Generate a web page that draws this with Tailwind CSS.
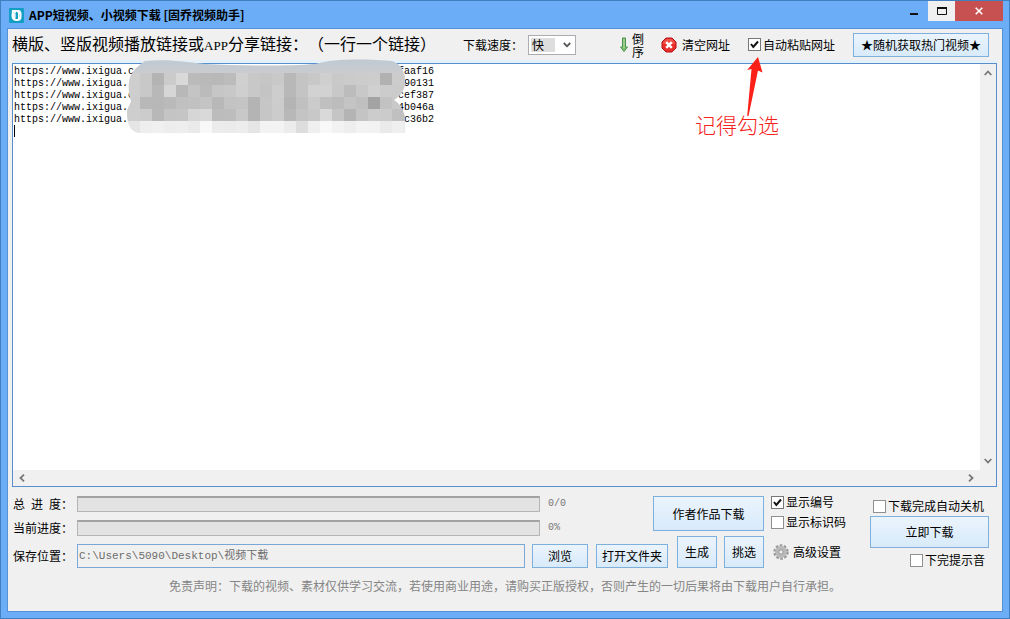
<!DOCTYPE html>
<html lang="zh-CN">
<head>
<meta charset="utf-8">
<title>APP短视频、小视频下载</title>
<script src="https://cdn.jsdelivr.net/npm/@tailwindcss/browser@4"></script>
</head>
<body class="relative flex h-screen flex-col border border-[#4080c0] bg-[#6badf6] font-['Noto_Sans_CJK_SC',sans-serif] text-xs leading-4 text-black [text-spacing-trim:space-all]">

<header class="flex h-7 shrink-0 items-start justify-between pr-1.5 pl-2">
  <div class="flex h-7 items-center gap-[5px]">
    <svg class="size-[15px]" viewBox="0 0 15 15"><rect width="15" height="15" rx="1" fill="#159ec5"/><path d="M3 2H9Q12.500 2 12.500 6V9Q12.500 13 8 13Q2.500 13 2.500 8Z" fill="#fff"/><path d="M7.500 3.500L9 5V11H6.500V5Z" fill="#159ec5"/><path d="M4 4L6 6V9M10.500 6V9" stroke="#bce8f2" fill="none"/></svg>
    <h1 class="text-xs font-bold">APP短视频、小视频下载 [固乔视频助手]</h1>
  </div>
  <div class="flex h-5">
    <button class="flex w-7 items-center justify-center" aria-label="最小化"><svg class="h-3 w-2" viewBox="0 0 8 12"><path d="M0 9H8" stroke="#111" stroke-width="2"/></svg></button>
    <button class="flex w-[27px] items-center justify-center bg-[#f0f0f0]" aria-label="最大化"><svg class="h-2 w-2.5" viewBox="0 0 10 8"><path d="M.5 0V7.500H9.500V0" fill="none" stroke="#111"/><path d="M0 1H10" stroke="#111" stroke-width="2"/></svg></button>
    <button class="flex w-12 items-center justify-center bg-[#c75050]" aria-label="关闭"><svg class="size-2" viewBox="0 0 8 8"><path d="M.7.7L7.300 7.300M7.300.7L.7 7.300" stroke="#fff" stroke-width="1.600"/></svg></button>
  </div>
</header>

<main class="mx-[7px] mb-[7px] flex min-h-0 flex-1 flex-col bg-[#f0f0f0] outline outline-[#5692d4]">
  <div class="flex h-[31px] shrink-0 items-center pr-[13px] pl-1">
    <label for="links" class="w-[451px] text-base leading-5 whitespace-nowrap">横版、竖版视频播放链接或<span class="font-['Liberation_Serif',serif] text-[13px]">APP</span>分享链接：（一行一个链接）</label>
    <label for="speed">下载速度：</label>
    <div class="relative ml-[5px] h-5 w-12 border border-[#abadb3] bg-white p-0.5">
      <select id="speed" class="block h-[14px] w-6 appearance-none bg-[#dedede] pl-px text-xs leading-[14px]"><option>快</option></select>
      <svg class="pointer-events-none absolute top-1.5 right-1 h-1.5 w-2" viewBox="0 0 8 6"><path d="M.8 1L4 4.300L7.200 1" fill="none" stroke="#555" stroke-width="1.800"/></svg>
    </div>
    <button class="ml-11 flex items-center gap-1">
      <svg class="h-4 w-2" viewBox="0 0 8 16"><path d="M2.500 1H5.500V10H7.500L4 14.500L.5 10H2.500Z" fill="#83bd75" stroke="#4a934a" stroke-width="1"/><path d="M4 2V11" stroke="#b5dda9"/></svg>
      <span class="w-3 leading-[13px]">倒序</span>
    </button>
    <button class="ml-[17px] flex items-center gap-[5px]">
      <svg class="size-4" viewBox="0 0 16 16"><path d="M5 1H11L15 5V11L11 15H5L1 11V5Z" fill="#e92d2b" stroke="#b61516" stroke-linejoin="round"/><path d="M5.300 2H10.700L14 5.300V7H2V5.300Z" fill="#f36960" opacity=".6"/><path d="M5.200 5.200L10.800 10.800M10.800 5.200L5.200 10.800" stroke="#fff" stroke-width="2.400"/></svg>
      <span>清空网址</span>
    </button>
    <label class="ml-[18px] flex items-center"><input type="checkbox" checked class="size-[13px] appearance-none border border-[#777] bg-white"><svg class="-ml-[13px] size-[13px]" viewBox="0 0 13 13"><path d="M3 6L5.300 9L10 3.500" fill="none" stroke="#111" stroke-width="2"/></svg><span class="ml-0.5">自动粘贴网址</span></label>
    <button class="ml-auto h-6 w-[136px] shrink-0 border border-[#7eb0de] bg-linear-to-b from-[#ebf4fc] to-[#d8eafa] whitespace-nowrap">★随机获取热门视频★</button>
  </div>

  <section class="mr-[5px] ml-1 flex min-h-0 flex-1 flex-col border-t-3 border-[#e5f1fa]">
    <div class="flex min-h-0 flex-1 flex-col border border-[#568fcb] bg-[#f0f0f0]">
      <div class="flex min-h-0 flex-1">
        <textarea id="links" wrap="off" spellcheck="false" class="min-w-0 flex-1 resize-none overflow-hidden bg-white px-px pt-0.5 font-['Liberation_Mono','Noto_Sans_CJK_SC',monospace] text-[10px] leading-3 whitespace-pre outline-none">https://www.ixigua.c                                            faaf16
https://www.ixigua.                                              90131
https://www.ixigua.c                                            cef387
https://www.ixigua.                                             4b046a
https://www.ixigua.                                              c36b2
</textarea>
        <div class="flex w-4 flex-col items-center justify-between py-1.5">
          <button class="flex" aria-label="向上滚动"><svg class="h-1.5 w-2" viewBox="0 0 8 6"><path d="M.7 5L4 1.500L7.300 5" fill="none" stroke="#777" stroke-width="1.800"/></svg></button>
          <button class="flex" aria-label="向下滚动"><svg class="h-1.5 w-2" viewBox="0 0 8 6"><path d="M.7 1L4 4.500L7.300 1" fill="none" stroke="#777" stroke-width="1.800"/></svg></button>
        </div>
      </div>
      <div class="flex h-4 shrink-0 items-center justify-between pr-[22px] pl-1.5">
        <button class="flex" aria-label="向左滚动"><svg class="h-2 w-1.5" viewBox="0 0 6 8"><path d="M5 .7L1.500 4L5 7.300" fill="none" stroke="#777" stroke-width="1.800"/></svg></button>
        <button class="flex" aria-label="向右滚动"><svg class="h-2 w-1.5" viewBox="0 0 6 8"><path d="M1 .7L4.500 4L1 7.300" fill="none" stroke="#777" stroke-width="1.800"/></svg></button>
      </div>
    </div>
  </section>

  <section class="flex shrink-0 pt-[9px] pr-[13px] pl-[5px]">
    <div class="flex min-w-0 flex-1 flex-col">
      <div class="flex">
        <div class="flex min-w-0 flex-1 flex-col gap-2">
          <div class="flex h-4 items-center"><span class="flex w-16 gap-1.5"><span>总</span><span>进</span><span>度：</span></span><div role="progressbar" aria-label="总进度" class="h-4 flex-1 border border-t-2 border-[#b5b5b5] border-t-[#a2a2a2] bg-[#e3e3e3]"></div><span class="ml-2 w-[105px] font-['Liberation_Mono',monospace] text-[10px] text-[#777]">0/0</span></div>
          <div class="flex h-4 items-center"><span class="w-16">当前进度：</span><div role="progressbar" aria-label="当前进度" class="h-4 flex-1 border border-t-2 border-[#b5b5b5] border-t-[#a2a2a2] bg-[#e3e3e3]"></div><span class="ml-2 w-[105px] font-['Liberation_Mono',monospace] text-[10px] text-[#777]">0%</span></div>
        </div>
        <button class="h-[35px] w-[111px] border border-[#7eb0de] bg-linear-to-b from-[#ebf4fc] to-[#d8eafa]">作者作品下载</button>
        <div class="-mt-0.5 ml-[7px] flex w-[99px] flex-col gap-1">
          <label class="flex items-center"><input type="checkbox" checked class="size-[13px] appearance-none border border-[#777] bg-white"><svg class="-ml-[13px] size-[13px]" viewBox="0 0 13 13"><path d="M3 6L5.300 9L10 3.500" fill="none" stroke="#111" stroke-width="2"/></svg><span class="ml-0.5">显示编号</span></label>
          <label class="flex items-center"><input type="checkbox" class="size-[13px] appearance-none border border-[#8e8f8f] bg-white"><span class="ml-0.5">显示标识码</span></label>
        </div>
      </div>
      <div class="flex h-8 items-end">
        <label for="path" class="mb-1 w-16 shrink-0">保存位置：</label>
        <div class="flex h-6 min-w-0 flex-1 items-center border border-[#7aa7d6] bg-[#f0f0f0]"><input id="path" value="C:\Users\5090\Desktop\视频下载" class="w-full bg-transparent px-px font-['Liberation_Mono','Noto_Sans_CJK_SC',monospace] text-[11px] text-[#6d6d6d] outline-none"></div>
        <button class="ml-[7px] h-6 w-14 border border-[#7eb0de] bg-linear-to-b from-[#ebf4fc] to-[#d8eafa]">浏览</button>
        <button class="ml-2 h-6 w-[72px] border border-[#7eb0de] bg-linear-to-b from-[#ebf4fc] to-[#d8eafa]">打开文件夹</button>
        <button class="ml-[9px] h-8 w-10 border border-[#7eb0de] bg-linear-to-b from-[#ebf4fc] to-[#d8eafa]">生成</button>
        <button class="ml-[7px] h-8 w-10 border border-[#7eb0de] bg-linear-to-b from-[#ebf4fc] to-[#d8eafa]">挑选</button>
        <button class="ml-[9px] flex h-8 w-[97px] items-center gap-1">
          <svg class="size-4" viewBox="0 0 16 16"><circle cx="8" cy="8" r="6.400" fill="none" stroke="#999" stroke-width="2.600" stroke-dasharray="2.500 1.521"/><circle cx="8" cy="8" r="4.200" fill="none" stroke="#b9b9b9" stroke-width="3.400"/><circle cx="8" cy="8" r="2.200" fill="#f0f0f0" stroke="#8b8b8b"/></svg>
          <span>高级设置</span>
        </button>
      </div>
    </div>
    <div class="flex w-[119px] shrink-0 flex-col">
      <label class="ml-[3px] flex h-5 items-center"><input type="checkbox" class="size-[13px] shrink-0 appearance-none border border-[#8e8f8f] bg-white"><span class="ml-0.5 whitespace-nowrap">下载完成自动关机</span></label>
      <button class="h-8 border border-[#7eb0de] bg-linear-to-b from-[#ebf4fc] to-[#d8eafa]">立即下载</button>
      <label class="mt-1 flex items-center self-end pr-1"><input type="checkbox" class="size-[13px] appearance-none border border-[#8e8f8f] bg-white"><span class="ml-0.5">下完提示音</span></label>
    </div>
  </section>
  <footer class="h-[43px] shrink-0 pt-2.5 text-center text-[#858585]">免责声明：下载的视频、素材仅供学习交流，若使用商业用途，请购买正版授权，否则产生的一切后果将由下载用户自行承担。</footer>
</main>

<!-- pixelated mask over the link text -->
<svg class="pointer-events-none absolute top-[54px] left-[119px] h-20 w-[300px]" viewBox="120 55 300 80" shape-rendering="crispEdges">
  <defs>
    <clipPath id="blob"><path d="M145 61C165 59 180 61 205 64C240 66 290 66 315 64C335 58 370 59 392 61C402 64 405 73 405 82C405 91 400 96 394 100C402 105 405 113 405 121V133H138C130 131 127 124 127 113C127 108 130 105 131 101C128 93 128 84 130 77C133 70 139 65 145 61Z"/></clipPath>
    <linearGradient id="tint" x1="0" y1="0" x2="0" y2="1"><stop offset="0" stop-color="#bdc8d2"/><stop offset="1" stop-color="#c9ccd0"/></linearGradient>
  </defs>
  <g clip-path="url(#blob)"><g id="cells"></g><rect x="120" y="56" width="290" height="17" fill="url(#tint)"/></g>
</svg>
<!-- text caret -->
<span class="pointer-events-none absolute top-[124px] left-[13px] h-3 w-px bg-black"></span>

<!-- hint pointing at the auto-paste tick box -->
<svg class="pointer-events-none absolute top-14 right-[246px] h-[60px] w-4" viewBox="0 0 16 60"><path d="M11 0L15.500 15.500L11 13.500L1.500 59H.2L4.500 12L.2 13Z" fill="#fb2018"/></svg>
<p class="pointer-events-none absolute top-[111px] right-[230px] text-[21px] leading-6 font-light text-[#f5221b]">记得勾选</p>

<script>
const rows = [
 "cf c8 b4 cb d9 bb b9 b8 bc d0 c8 c6 c9 b8 c4 c8 cf c9 cb cc cd b1 cc cc",
 "ce c8 b8 d6 b8 c4 bb c6 c8 cf c8 c4 cd b8 c4 d2 d2 c8 bc c8 d0 cc cb ca",
 "cd b8 b7 ba c0 c1 c4 b8 c3 c4 b4 c6 cc b4 c0 cb c0 bc c4 bf a3 c2 c9 ca",
 "ce cc b8 c4 c5 d6 d9 bc bd c8 b4 c6 cc b8 c4 c8 d9 c5 b4 c4 cc cb c0 c4",
 "e5 ee f0 ed ee ea f8 ec eb ed e5 f3 f3 ec dd ef f8 f2 ee f3 f2 ea ef e9"];
const svgNs = "http://www.w3.org/2000/svg", cells = document.getElementById("cells");
rows.forEach((row, r) => row.split(" ").forEach((v, c) => {
  const cell = document.createElementNS(svgNs, "rect");
  cell.setAttribute("x", c === 0 ? 126 : 128 + c * 12);
  cell.setAttribute("y", 73 + r * 12);
  cell.setAttribute("width", 14);
  cell.setAttribute("height", 12);
  cell.setAttribute("fill", "#" + v + v + v);
  cells.append(cell);
}));
</script>
</body>
</html>
